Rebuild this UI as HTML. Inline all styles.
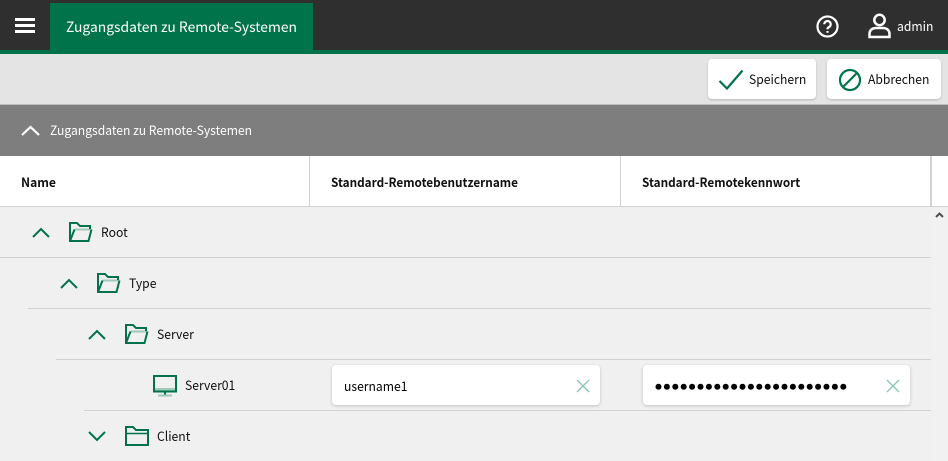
<!DOCTYPE html>
<html><head><meta charset="utf-8"><style>
html,body{margin:0;padding:0;width:948px;height:461px;overflow:hidden;background:#f0f0f0}
body{position:relative;font-family:"Noto Sans CJK JP","Liberation Sans",sans-serif;font-size:13px;color:#111}
.a{position:absolute}
.t{position:absolute;white-space:nowrap;line-height:18px;transform:scaleX(.935);transform-origin:0 50%}
.l{position:absolute;height:1px;background:#d2d2d2}
.btn{position:absolute;background:#fff;border-radius:4px;box-shadow:0 1px 2px rgba(0,0,0,.2);top:59px;height:40px}
.inp{position:absolute;background:#fff;border-radius:4px;box-shadow:0 1px 3px rgba(0,0,0,.2);top:365px;height:40px}
svg{position:absolute;overflow:visible}
</style></head><body>
<div class="a" style="left:0;top:0;width:948px;height:50px;background:#2f2f2f"></div>
<div class="a" style="left:0;top:50px;width:948px;height:4px;background:#00734a"></div>
<div class="a" style="left:50px;top:3px;width:263px;height:47px;background:#00734a"></div>
<div class="a" style="left:15px;top:18px;width:20px;height:3px;background:#fff"></div>
<div class="a" style="left:15px;top:24px;width:20px;height:3px;background:#fff"></div>
<div class="a" style="left:15px;top:30px;width:20px;height:3px;background:#fff"></div>
<div class="t" style="left:66px;top:18px;font-size:14px;color:#fff;transform:scaleX(.99)">Zugangsdaten zu Remote-Systemen</div>
<svg style="left:816px;top:15px" width="23" height="23" fill="none" stroke="#fff" stroke-width="2.200"><circle cx="11.500" cy="11.500" r="10"/><path d="M8.300 9.200a3.200 3.200 0 1 1 4.800 2.800c-1 .6-1.600 1.100-1.600 2.200"/><path d="M11.500 16v1.800"/></svg>
<svg style="left:868px;top:13px" width="24" height="26" fill="none" stroke="#fff" stroke-width="2.500"><circle cx="11.500" cy="7" r="5.200"/><path d="M1.500 24v-3c0-4 3-6 6.500-6h7c3.500 0 6.500 2 6.500 6v3z"/></svg>
<div class="t" style="left:897px;top:17px;color:#fff">admin</div>

<div class="a" style="left:0;top:54px;width:948px;height:50px;background:#e4e4e4"></div>
<div class="btn" style="left:708px;width:108px"></div>
<div class="btn" style="left:827px;width:114px"></div>
<svg style="left:718px;top:69px" width="26" height="21" fill="none" stroke="#00734a" stroke-width="2.200"><path d="M1.500 12L9 19.500 24.500 1.500"/></svg>
<div class="t" style="left:749px;top:70px">Speichern</div>
<svg style="left:838px;top:68px" width="24" height="24" fill="none" stroke="#00734a" stroke-width="2.200"><circle cx="12" cy="12" r="10"/><path d="M5 19L19 5"/></svg>
<div class="t" style="left:868px;top:70px">Abbrechen</div>

<div class="a" style="left:0;top:104px;width:948px;height:1px;background:#bdbdbd"></div>
<div class="a" style="left:0;top:105px;width:948px;height:51px;background:#7e7e7e"></div>
<svg style="left:21px;top:125px" width="19" height="11" fill="none" stroke="#fff" stroke-width="2.200"><path d="M1 10L9.500 2 18 10"/></svg>
<div class="t" style="left:50px;top:121px;font-size:12.500px;color:#fff;transform:scaleX(.97)">Zugangsdaten zu Remote-Systemen</div>

<div class="a" style="left:0;top:156px;width:948px;height:50px;background:#fff"></div>
<div class="a" style="left:0;top:206px;width:948px;height:1px;background:#d2d2d2"></div>
<div class="a" style="left:309px;top:156px;width:1px;height:50px;background:#d2d2d2"></div>
<div class="a" style="left:620px;top:156px;width:1px;height:50px;background:#d2d2d2"></div>
<div class="a" style="left:930px;top:156px;width:2px;height:50px;background:#d2d2d2"></div>
<div class="t" style="left:21px;top:173px;font-weight:700;font-size:12.500px;transform:scaleX(.97)">Name</div>
<div class="t" style="left:331px;top:173px;font-weight:700;font-size:12.500px;transform:scaleX(.94)">Standard-Remotebenutzername</div>
<div class="t" style="left:642px;top:173px;font-weight:700;font-size:12.500px;transform:scaleX(.94)">Standard-Remotekennwort</div>

<div class="a" style="left:931px;top:207px;width:17px;height:254px;background:#f1f1f1"></div>
<svg style="left:935px;top:212px" width="9" height="6" fill="none" stroke="#505050" stroke-width="2"><path d="M1 5L4.500 1.500 8 5"/></svg>

<div class="l" style="left:0;top:257px;width:931px"></div>
<div class="l" style="left:28px;top:308px;width:903px"></div>
<div class="l" style="left:56px;top:359px;width:875px"></div>
<div class="l" style="left:84px;top:410px;width:847px"></div>

<svg style="left:32px;top:227px" width="18" height="11" fill="none" stroke="#00734a" stroke-width="2"><path d="M1 10L9 2l8 8"/></svg>
<svg style="left:69px;top:222px" width="24" height="20" fill="none" stroke="#00734a" stroke-width="2"><path d="M5.500 7.500H22.500" stroke="#9fc9b8"/><path d="M22.500 7.500L19.500 19H1V1h7l3 3h10v3"/><path d="M1 19L5.500 7.500"/></svg>
<div class="t" style="left:101px;top:223px">Root</div>

<svg style="left:60px;top:278px" width="18" height="11" fill="none" stroke="#00734a" stroke-width="2"><path d="M1 10L9 2l8 8"/></svg>
<svg style="left:97px;top:273px" width="24" height="20" fill="none" stroke="#00734a" stroke-width="2"><path d="M5.500 7.500H22.500" stroke="#9fc9b8"/><path d="M22.500 7.500L19.500 19H1V1h7l3 3h10v3"/><path d="M1 19L5.500 7.500"/></svg>
<div class="t" style="left:129px;top:274px">Type</div>

<svg style="left:88px;top:329px" width="18" height="11" fill="none" stroke="#00734a" stroke-width="2"><path d="M1 10L9 2l8 8"/></svg>
<svg style="left:125px;top:324px" width="24" height="20" fill="none" stroke="#00734a" stroke-width="2"><path d="M5.500 7.500H22.500" stroke="#9fc9b8"/><path d="M22.500 7.500L19.500 19H1V1h7l3 3h10v3"/><path d="M1 19L5.500 7.500"/></svg>
<div class="t" style="left:157px;top:325px">Server</div>

<svg style="left:153px;top:375px" width="24" height="22" fill="none" stroke="#00734a" stroke-width="2"><path d="M2 14.500h20" stroke="#9fc9b8" stroke-width="3"/><rect x="1" y="1" width="22" height="15.500"/><path d="M12 17v3"/><path d="M5 20.500h14" stroke="#9fc9b8"/></svg>
<div class="t" style="left:185px;top:376px">Server01</div>

<div class="inp" style="left:332px;width:268px"></div>
<div class="t" style="left:344px;top:377px;color:#000">username1</div>
<svg style="left:576px;top:379px" width="14" height="14" fill="none" stroke="#86c4b4" stroke-width="1.300"><path d="M1 1l12 12M13 1L1 13"/></svg>
<div class="inp" style="left:643px;width:267px"></div>
<svg style="left:655px;top:383px" width="195" height="8" fill="#000"><circle cx="3.500" cy="3.800" r="3"/><circle cx="11.900" cy="3.800" r="3"/><circle cx="20.300" cy="3.800" r="3"/><circle cx="28.700" cy="3.800" r="3"/><circle cx="37.100" cy="3.800" r="3"/><circle cx="45.500" cy="3.800" r="3"/><circle cx="53.900" cy="3.800" r="3"/><circle cx="62.300" cy="3.800" r="3"/><circle cx="70.700" cy="3.800" r="3"/><circle cx="79.100" cy="3.800" r="3"/><circle cx="87.500" cy="3.800" r="3"/><circle cx="95.900" cy="3.800" r="3"/><circle cx="104.300" cy="3.800" r="3"/><circle cx="112.700" cy="3.800" r="3"/><circle cx="121.100" cy="3.800" r="3"/><circle cx="129.500" cy="3.800" r="3"/><circle cx="137.900" cy="3.800" r="3"/><circle cx="146.300" cy="3.800" r="3"/><circle cx="154.700" cy="3.800" r="3"/><circle cx="163.100" cy="3.800" r="3"/><circle cx="171.500" cy="3.800" r="3"/><circle cx="179.900" cy="3.800" r="3"/><circle cx="188.300" cy="3.800" r="3"/></svg>
<svg style="left:886px;top:379px" width="14" height="14" fill="none" stroke="#86c4b4" stroke-width="1.300"><path d="M1 1l12 12M13 1L1 13"/></svg>

<svg style="left:88px;top:431px" width="18" height="11" fill="none" stroke="#00734a" stroke-width="2"><path d="M1 1l8 8 8-8"/></svg>
<svg style="left:125px;top:426px" width="24" height="20" fill="none" stroke="#00734a" stroke-width="2"><path d="M1 19V1h7l3 3h12v15z"/><path d="M1 7.500h22" stroke-width="1.500"/></svg>
<div class="t" style="left:157px;top:427px">Client</div>
</body></html>
